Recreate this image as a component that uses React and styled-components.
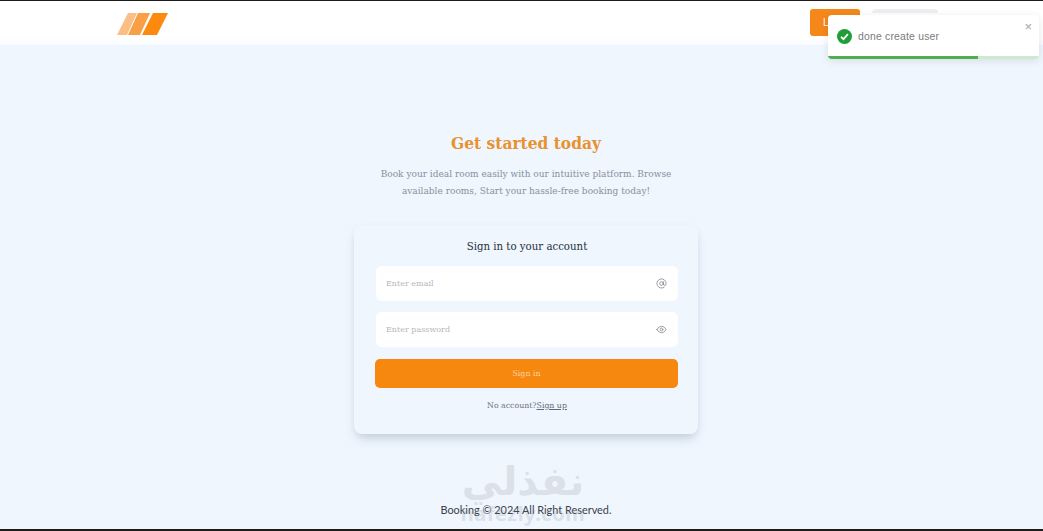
import React from "react";
import styled, { createGlobalStyle } from "styled-components";

const Global = createGlobalStyle`
  html, body { margin: 0; padding: 0; height: 100%; }
  body { background: #eff6fe; font-family: "DejaVu Serif", "Liberation Serif", serif; overflow: hidden; }
`;

const Page = styled.div`
  position: relative;
  width: 1043px;
  height: 531px;
  display: flex;
  flex-direction: column;
  background: #eff6fe;
  border-top: 1px solid #1c1c1c;
  border-bottom: 2px solid #1c1c1c;
  box-sizing: border-box;
  overflow: hidden;
`;

const Header = styled.header`
  height: 44px;
  flex: none;
  background: linear-gradient(#ffffff 85%, #f8fbff);
  display: flex;
  align-items: center;
  justify-content: space-between;
  padding: 0 105px 0 117px;
  box-sizing: border-box;
`;

const LogoMark = styled.svg`
  width: 52px;
  height: 22px;
  margin-top: 2px;
`;

const Actions = styled.div`
  display: flex;
  align-items: flex-start;
  gap: 12px;
  height: 27px;
  margin-top: -1px;
`;

const LoginButton = styled.button`
  width: 50px;
  height: 27px;
  border: 0;
  border-radius: 3px;
  padding: 0 0 0 13px;
  text-align: left;
  background: #f6871a;
  color: #fff;
  font: 500 10px "Liberation Sans", sans-serif;
`;

const GhostButton = styled.div`
  width: 66px;
  height: 27px;
  border-top: 4px solid #eceef1;
  border-radius: 4px;
  box-sizing: border-box;
  background: #fff;
`;

const Main = styled.main`
  flex: 1;
  display: flex;
  flex-direction: column;
  align-items: center;
  padding: 84px 0 0 9px;
`;

const Title = styled.h1`
  margin: 0;
  font-size: 17.2px;
  font-stretch: condensed;
  line-height: 28px;
  font-weight: 700;
  color: #e8912f;
`;

const Intro = styled.p`
  margin: 9px 0 0;
  width: 320px;
  text-align: center;
  font-size: 9px;
  line-height: 17px;
  color: #87919d;
`;

const Card = styled.form`
  margin-top: 25px;
  width: 344px;
  height: 209px;
  box-sizing: border-box;
  padding: 13px 20px 0 22px;
  display: flex;
  flex-direction: column;
  align-items: stretch;
  background: #eff6fe;
  border-radius: 8px;
  box-shadow: 0 7px 11px -3px rgba(70, 90, 120, 0.26), 0 1px 6px rgba(70, 90, 120, 0.04);
`;

const CardTitle = styled.h2`
  margin: 0;
  text-align: center;
  font-size: 10.2px;
  line-height: 18px;
  font-weight: 400;
  color: #25303d;
`;

const Field = styled.div`
  margin-top: ${(p) => p.$top}px;
  height: 35px;
  display: flex;
  align-items: center;
  justify-content: space-between;
  padding: 0 11px 0 10px;
  background: #fff;
  border-radius: 6px;
`;

const Placeholder = styled.span`
  font-size: 8px;
  color: #b3b7bd;
`;

const FieldIcon = styled.svg`
  width: 11px;
  height: 11px;
  fill: none;
  stroke: #909499;
  stroke-width: 2;
  stroke-linecap: round;
  stroke-linejoin: round;
`;

const Submit = styled.button`
  margin-top: 12px;
  margin-left: -1px;
  height: 29px;
  border: 0;
  border-radius: 5px;
  background: #f6870f;
  color: #fbd7a8;
  font-family: inherit;
  font-size: 7.9px;
`;

const SignUp = styled.p`
  margin: 11px 0 0;
  text-align: center;
  font-size: 7.8px;
  line-height: 14px;
  color: #6a7480;
`;

const SignLink = styled.a`
  color: #5f6a76;
  text-decoration: underline;
`;

const Footer = styled.footer`
  flex: none;
  height: 40px;
  box-sizing: border-box;
  padding-left: 9px;
  text-align: center;
  font: 400 10.9px/18px Lato, sans-serif;
  color: #3a424c;
`;

const FooterText = styled.span`
  position: relative;
  top: 12px;
`;

const Watermark = styled.div`
  position: absolute;
  left: 440px;
  top: 457px;
  width: 166px;
  text-align: center;
  color: #7b7f84;
  opacity: 0.17;
  pointer-events: none;
`;

const WatermarkArabic = styled.div`
  font: 700 40px/46px "DejaVu Sans", sans-serif;
`;

const WatermarkLatin = styled.div`
  font: 700 20px/20px "Noto Sans", sans-serif;
  letter-spacing: 0.5px;
`;

const Toast = styled.div`
  position: absolute;
  left: 828px;
  top: 14px;
  width: 211px;
  height: 44px;
  background: #fff;
  border-radius: 4px;
  box-shadow: 0 2px 8px rgba(0, 0, 0, 0.1);
  display: flex;
  align-items: center;
  gap: 6px;
  padding: 0 9px 1px;
  box-sizing: border-box;
  overflow: hidden;
`;

const ToastText = styled.span`
  font: 400 10.4px "Liberation Sans", sans-serif;
  letter-spacing: 0.2px;
  color: #7b7b7b;
`;

const ToastClose = styled.span`
  position: absolute;
  top: 5px;
  right: 7px;
  font: 400 13px/14px "Liberation Sans", sans-serif;
  color: #a4a4a4;
`;

const ProgressTrack = styled.div`
  position: absolute;
  left: 0;
  right: 0;
  bottom: 0;
  height: 3px;
  background: #cfe8d0;
`;

const ProgressBar = styled.div`
  height: 100%;
  background: #4caf50;
`;

function Logo() {
  return (
    <LogoMark viewBox="0 0 52 22" aria-hidden="true">
      <polygon points="0,22 11,0 20,0 10,22" fill="#fbbf85" />
      <polygon points="11,22 21,0 33,0 23,22" fill="#f99f45" />
      <polygon points="25,22 36,0 51,0 40,22" fill="#fb8a0e" />
    </LogoMark>
  );
}

export default function App() {
  return (
    <Page>
      <Global />
      <Header>
        <Logo />
        <Actions>
          <LoginButton type="button">L</LoginButton>
          <GhostButton />
        </Actions>
      </Header>
      <Main>
        <Title>Get started today</Title>
        <Intro>
          Book your ideal room easily with our intuitive platform. Browse available rooms, Start your hassle-free booking today!
        </Intro>
        <Card>
          <CardTitle>Sign in to your account</CardTitle>
          <Field $top={10}>
            <Placeholder>Enter email</Placeholder>
            <FieldIcon viewBox="0 0 24 24">
              <circle cx="12" cy="12" r="4" />
              <path d="M16 8v5a3 3 0 0 0 6 0v-1a10 10 0 1 0-4 8" />
            </FieldIcon>
          </Field>
          <Field $top={11}>
            <Placeholder>Enter password</Placeholder>
            <FieldIcon viewBox="0 0 24 24">
              <path d="M2 12s3.6-7 10-7 10 7 10 7-3.6 7-10 7-10-7-10-7z" />
              <circle cx="12" cy="12" r="3" />
            </FieldIcon>
          </Field>
          <Submit type="button">Sign in</Submit>
          <SignUp>
            No account?<SignLink href="#">Sign up</SignLink>
          </SignUp>
        </Card>
      </Main>
      <Footer>
        <FooterText>Booking © 2024 All Right Reserved.</FooterText>
      </Footer>
      <Watermark>
        <WatermarkArabic>نفذلي</WatermarkArabic>
        <WatermarkLatin>nafezly.com</WatermarkLatin>
      </Watermark>
      <Toast>
        <svg width="15" height="15" viewBox="0 0 24 24" aria-hidden="true">
          <circle cx="12" cy="12" r="12" fill="#1f9d38" />
          <path d="M6.5 12.5l3.8 3.8 7.2-8" fill="none" stroke="#fff" strokeWidth="2.8" />
        </svg>
        <ToastText>done create user</ToastText>
        <ToastClose>×</ToastClose>
        <ProgressTrack>
          <ProgressBar style={{ width: "71%" }} />
        </ProgressTrack>
      </Toast>
    </Page>
  );
}
